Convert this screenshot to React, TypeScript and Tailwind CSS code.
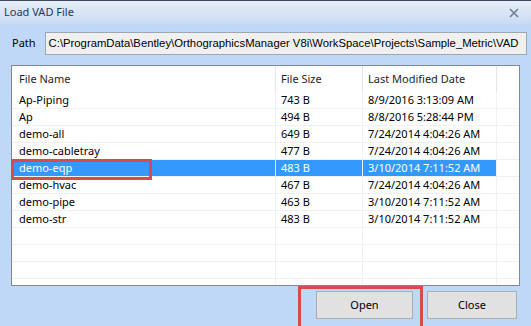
import React from 'react';

interface FileRow {
    name: string;
    size: string;
    date: string;
    selected?: boolean;
}

const files: FileRow[] = [
    { name: 'Ap-Piping', size: '743 B', date: '8/9/2016 3:13:09 AM' },
    { name: 'Ap', size: '494 B', date: '8/8/2016 5:28:44 PM' },
    { name: 'demo-all', size: '649 B', date: '7/24/2014 4:04:26 AM' },
    { name: 'demo-cabletray', size: '477 B', date: '7/24/2014 4:04:26 AM' },
    { name: 'demo-eqp', size: '483 B', date: '3/10/2014 7:11:52 AM', selected: true },
    { name: 'demo-hvac', size: '467 B', date: '7/24/2014 4:04:26 AM' },
    { name: 'demo-pipe', size: '463 B', date: '3/10/2014 7:11:52 AM' },
    { name: 'demo-str', size: '483 B', date: '3/10/2014 7:11:52 AM' },
];

const ui = { fontFamily: '"Noto Sans", "Open Sans", sans-serif' };

const Row: React.FC<{ row?: FileRow }> = ({ row }) => {
    const sel = row?.selected;
    return (
        <div className={`flex h-[17px] shrink-0 border-b border-[#f0f0f0] text-[11px] leading-[16px] ${sel ? 'text-white' : 'text-black'}`}>
            <div className={`w-[264px] pl-[7px] border-r border-[#f0f0f0] ${sel ? 'bg-[#3399ff]' : ''}`}>{row?.name}</div>
            <div className={`w-[87px] pl-[5px] border-r border-[#f0f0f0] ${sel ? 'bg-[#3399ff]' : ''}`}>{row?.size}</div>
            <div className={`w-[134px] pl-[5px] border-r border-[#f0f0f0] ${sel ? 'bg-[#3399ff]' : ''}`}>{row?.date}</div>
            <div className="flex-1" />
        </div>
    );
};

const App: React.FC = () => {
    return (
        <div className="relative w-[531px] h-[326px] overflow-hidden bg-[#c0d8f7] flex flex-col" style={ui}>
            {/* title bar */}
            <div className="h-[24px] shrink-0 border-t border-[#3b4b60] bg-gradient-to-b from-[#e6eff9] to-[#c9dbf1] flex items-center justify-between pl-[4px] pr-[12px]">
                <span className="text-[11px] text-[#1e395b]">Load VAD File</span>
                <svg width="10" height="10" viewBox="0 0 10 10" className="mt-[1px]">
                    <path d="M1 1 L9 9 M9 1 L1 9" stroke="#6f7f93" strokeWidth="1.6" />
                </svg>
            </div>

            {/* path */}
            <div className="flex items-center mt-[8px] pl-[12px] pr-[4px] gap-[9px]">
                <span className="text-[11px] text-black">Path</span>
                <div
                    className="flex-1 h-[23px] border border-[#9ea6b0] bg-[#f0f0f0] flex items-center pl-[3px] text-[11.3px] text-black whitespace-nowrap overflow-hidden"
                    style={{ fontFamily: '"Liberation Sans", Arial, sans-serif' }}
                >
                    C:\ProgramData\Bentley\OrthographicsManager V8i\WorkSpace\Projects\Sample_Metric\VAD
                </div>
            </div>

            {/* list view */}
            <div className="ml-[11px] mt-[10px] w-[509px] h-[221px] shrink-0 border border-[#828790] bg-white flex flex-col overflow-hidden">
                <div className="flex h-[26px] shrink-0 items-center text-[11px] text-[#1e1e1e]">
                    <div className="w-[264px] h-full pl-[7px] flex items-center border-r border-[#e5e5e5]">File Name</div>
                    <div className="w-[87px] h-full pl-[5px] flex items-center border-r border-[#e5e5e5]">File Size</div>
                    <div className="w-[134px] h-full pl-[5px] flex items-center border-r border-[#e5e5e5]">Last Modified Date</div>
                    <div className="flex-1" />
                </div>
                {files.map((f) => (
                    <Row key={f.name} row={f} />
                ))}
                <Row />
                <Row />
                <Row />
                <Row />
            </div>

            {/* buttons */}
            <div className="flex justify-end gap-[14px] mt-[5px] pr-[14px]">
                <button className="w-[97px] h-[28px] bg-[#e1e1e1] border border-[#adadad] text-[11px] text-black">Open</button>
                <button className="w-[90px] h-[28px] bg-[#e1e1e1] border border-[#adadad] text-[11px] text-black">Close</button>
            </div>

            {/* red annotation boxes */}
            <div className="absolute left-[11px] top-[159px] w-[141px] h-[21px] border-[3px] border-[#d64b4b]" />
            <div className="absolute left-[298px] top-[286px] w-[125px] h-[44px] border-[3px] border-[#d64b4b]" />
        </div>
    );
};

export default App;
